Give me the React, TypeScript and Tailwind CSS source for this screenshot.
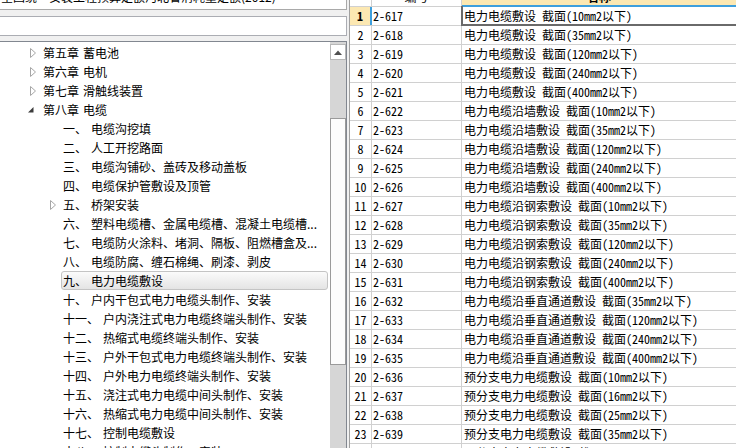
import React from "react";

type TreeItem = {
  level: 0 | 1;
  exp?: "closed" | "open";
  prefix: string;
  name: string;
  selected?: boolean;
};

const treeItems: TreeItem[] = [
  { level: 0, exp: "closed", prefix: "第五章", name: "蓄电池" },
  { level: 0, exp: "closed", prefix: "第六章", name: "电机" },
  { level: 0, exp: "closed", prefix: "第七章", name: "滑触线装置" },
  { level: 0, exp: "open", prefix: "第八章", name: "电缆" },
  { level: 1, prefix: "一、", name: "电缆沟挖填" },
  { level: 1, prefix: "二、", name: "人工开挖路面" },
  { level: 1, prefix: "三、", name: "电缆沟铺砂、盖砖及移动盖板" },
  { level: 1, prefix: "四、", name: "电缆保护管敷设及顶管" },
  { level: 1, exp: "closed", prefix: "五、", name: "桥架安装" },
  { level: 1, prefix: "六、", name: "塑料电缆槽、金属电缆槽、混凝土电缆槽..." },
  { level: 1, prefix: "七、", name: "电缆防火涂料、堵洞、隔板、阻燃槽盒及..." },
  { level: 1, prefix: "八、", name: "电缆防腐、缠石棉绳、刷漆、剥皮" },
  { level: 1, prefix: "九、", name: "电力电缆敷设", selected: true },
  { level: 1, prefix: "十、", name: "户内干包式电力电缆头制作、安装" },
  { level: 1, prefix: "十一、", name: "户内浇注式电力电缆终端头制作、安装" },
  { level: 1, prefix: "十二、", name: "热缩式电缆终端头制作、安装" },
  { level: 1, prefix: "十三、", name: "户外干包式电力电缆终端头制作、安装" },
  { level: 1, prefix: "十四、", name: "户外电力电缆终端头制作、安装" },
  { level: 1, prefix: "十五、", name: "浇注式电力电缆中间头制作、安装" },
  { level: 1, prefix: "十六、", name: "热缩式电力电缆中间头制作、安装" },
  { level: 1, prefix: "十七、", name: "控制电缆敷设" },
  { level: 1, prefix: "十八、", name: "控制电缆头制作、安装" },
];

const rows: [string, string][] = [
  ["2-617", "电力电缆敷设 截面(10mm2以下)"],
  ["2-618", "电力电缆敷设 截面(35mm2以下)"],
  ["2-619", "电力电缆敷设 截面(120mm2以下)"],
  ["2-620", "电力电缆敷设 截面(240mm2以下)"],
  ["2-621", "电力电缆敷设 截面(400mm2以下)"],
  ["2-622", "电力电缆沿墙敷设 截面(10mm2以下)"],
  ["2-623", "电力电缆沿墙敷设 截面(35mm2以下)"],
  ["2-624", "电力电缆沿墙敷设 截面(120mm2以下)"],
  ["2-625", "电力电缆沿墙敷设 截面(240mm2以下)"],
  ["2-626", "电力电缆沿墙敷设 截面(400mm2以下)"],
  ["2-627", "电力电缆沿钢索敷设 截面(10mm2以下)"],
  ["2-628", "电力电缆沿钢索敷设 截面(35mm2以下)"],
  ["2-629", "电力电缆沿钢索敷设 截面(120mm2以下)"],
  ["2-630", "电力电缆沿钢索敷设 截面(240mm2以下)"],
  ["2-631", "电力电缆沿钢索敷设 截面(400mm2以下)"],
  ["2-632", "电力电缆沿垂直通道敷设 截面(35mm2以下)"],
  ["2-633", "电力电缆沿垂直通道敷设 截面(120mm2以下)"],
  ["2-634", "电力电缆沿垂直通道敷设 截面(240mm2以下)"],
  ["2-635", "电力电缆沿垂直通道敷设 截面(400mm2以下)"],
  ["2-636", "预分支电力电缆敷设 截面(10mm2以下)"],
  ["2-637", "预分支电力电缆敷设 截面(16mm2以下)"],
  ["2-638", "预分支电力电缆敷设 截面(25mm2以下)"],
  ["2-639", "预分支电力电缆敷设 截面(35mm2以下)"],
  ["2-640", "预分支电力电缆敷设 截面(50mm2以下)"],
];

function Hollow() {
  return (
    <svg width="6" height="10" viewBox="0 0 6 10" className="ml-[2px]">
      <polygon points="0.5,0.5 5.5,5 0.5,9.5" fill="#ffffff" stroke="#a6a6a6" strokeWidth="1" />
    </svg>
  );
}

function Filled() {
  return (
    <svg width="6" height="6" viewBox="0 0 6 6" className="ml-[0px] mt-[1px]">
      <polygon points="5.5,0 5.5,5.5 0,5.5" fill="#3c3c3c" />
    </svg>
  );
}

function TreeRow({ item }: { item: TreeItem }) {
  return (
    <div className={`h-[19px] flex items-center ${item.level === 0 ? "pl-[28px]" : "pl-[48px]"}`}>
      <div className="w-[15px] h-full flex items-center shrink-0">
        {item.exp === "closed" && <Hollow />}
        {item.exp === "open" && <Filled />}
      </div>
      <div
        className={`-ml-[2px] mr-[2px] h-full flex-1 flex items-center pl-[1px] border rounded-[3px] whitespace-nowrap overflow-hidden ${
          item.selected
            ? "border-[#c4c4c4] bg-linear-to-b from-[#fbfbfb] to-[#e4e4e4]"
            : "border-transparent"
        }`}
      >
        <span>{item.prefix}</span>
        <span className="ml-[4px]">{item.name}</span>
      </div>
    </div>
  );
}

export default function App() {
  return (
    <div className="w-[736px] h-[448px] overflow-hidden flex bg-[#f0f0f0] text-black text-[12px] font-[family-name:'Noto_Sans_CJK_SC',sans-serif]">
      {/* left panel */}
      <div className="w-[347px] shrink-0 flex flex-col">
        <div className="h-[22px] -mt-[12px] shrink-0 bg-white border-b border-r border-[#a9a9a9] flex items-center pl-[1px] pb-[3px] whitespace-nowrap overflow-hidden">
          全国统一安装工程预算定额河北省消耗量定额(2012)
        </div>
        <div className="h-[20px] mt-[6px] shrink-0 bg-white border border-l-0 border-[#abadb3]" />
        <div className="mt-[5px] flex-1 min-h-0 bg-white border-t border-r border-[#828790] flex overflow-hidden">
          <div className="flex-1 pt-[1px] min-w-0">
            {treeItems.map((it, i) => (
              <TreeRow key={i} item={it} />
            ))}
          </div>
          <div className="w-[16px] shrink-0 flex flex-col bg-[#d6d6d6]">
            <div className="h-[2px] bg-[#d6d6d6]" />
            <div className="h-[16px] bg-white border border-[#b8b8b8] flex items-center justify-center">
              <svg width="8" height="5" viewBox="0 0 8 5">
                <polygon points="0,5 4,0.5 8,5" fill="#505050" />
              </svg>
            </div>
            <div className="h-[58px] bg-[#d6d6d6]" />
            <div className="h-[247px] bg-[#fcfcfc] border border-[#9a9a9a]" />
            <div className="flex-1 bg-[#d6d6d6]" />
          </div>
        </div>
      </div>

      {/* splitter */}
      <div className="w-[2px] shrink-0 bg-[#f0f0f0]" />

      {/* grid */}
      <div className="flex-1 min-w-0 bg-white border-l border-[#a0a0a0] overflow-hidden font-[family-name:'Noto_Sans_Mono_CJK_SC','Noto_Sans_CJK_SC',monospace]">
        <div className="-mt-[12px] flex h-[19px]">
          <div className="w-[22px] shrink-0 h-[19px] border-r border-b border-[#d0d0d0] bg-white" />
          <div className="w-[90px] shrink-0 h-[19px] border-r border-b border-[#d0d0d0] bg-white flex items-center justify-center">
            编号
          </div>
          <div className="flex-1 h-[19px] border-b-2 border-[#3d9fdd] bg-[#fce8b2] flex items-center justify-center font-bold">
            名称
          </div>
        </div>
        {rows.map(([code, name], i) => (
          <div key={i} className="flex h-[19px] border-b border-[#d0d0d0]">
            <div
              className={`w-[22px] shrink-0 h-full flex items-center justify-center ${
                i === 0
                  ? "bg-[#fce8b2] border-r-2 border-[#3d9fdd] font-bold"
                  : "border-r border-[#d0d0d0]"
              }`}
            >
              {i + 1}
            </div>
            <div className="w-[90px] shrink-0 h-full border-r border-[#d0d0d0] flex items-center pl-[1px] whitespace-nowrap">
              {code}
            </div>
            <div className="relative flex-1 h-full flex items-center pl-[2px] whitespace-nowrap overflow-visible">
              {name}
              {i === 0 && (
                <div className="absolute left-[-1px] top-[-1px] bottom-[-1px] right-[-6px] border-l-2 border-b-2 border-r-2 border-[#6a6a6a]" />
              )}
            </div>
          </div>
        ))}
      </div>
    </div>
  );
}
